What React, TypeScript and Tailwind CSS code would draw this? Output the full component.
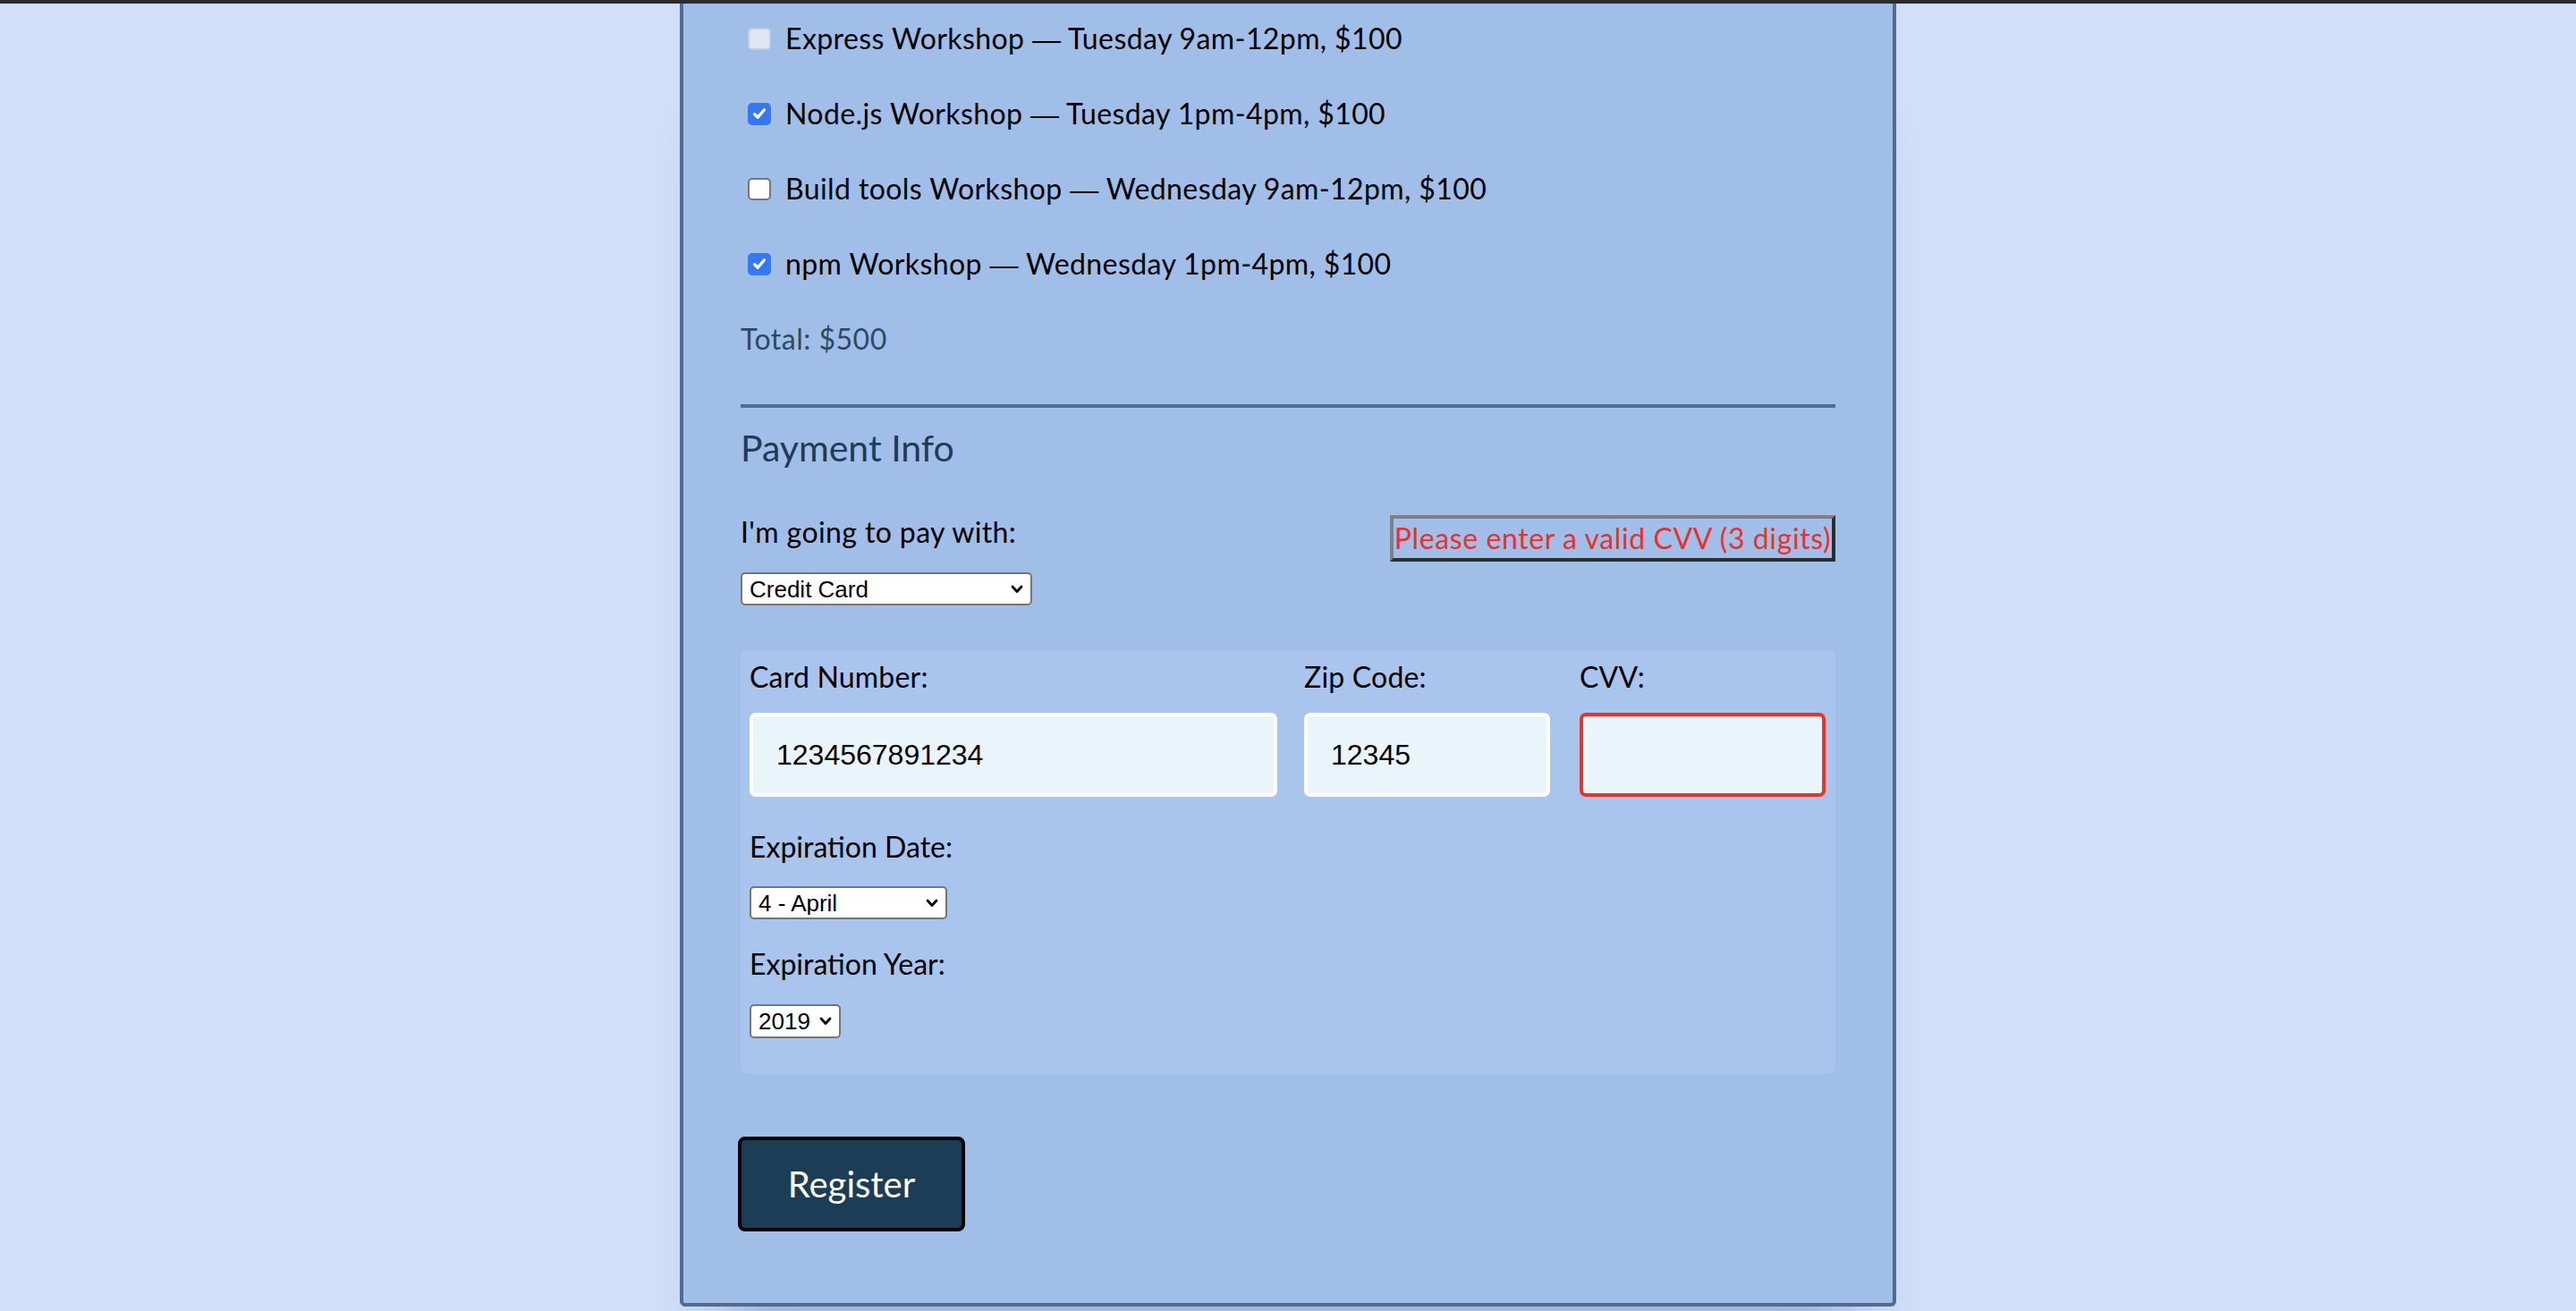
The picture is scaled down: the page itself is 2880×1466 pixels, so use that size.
import { useState } from "react";

type BoxState = "disabled" | "checked" | "empty";

const WORKSHOPS: { name: string; time: string; state: BoxState }[] = [
  { name: "Express Workshop", time: "Tuesday 9am-12pm, $100", state: "disabled" },
  { name: "Node.js Workshop", time: "Tuesday 1pm-4pm, $100", state: "checked" },
  { name: "Build tools Workshop", time: "Wednesday 9am-12pm, $100", state: "empty" },
  { name: "npm Workshop", time: "Wednesday 1pm-4pm, $100", state: "checked" },
];

function Box({ state }: { state: BoxState }) {
  if (state === "checked")
    return (
      <span className="flex h-[25px] w-[26px] shrink-0 items-center justify-center rounded-[5px] bg-[#3478f6]">
        <svg viewBox="0 0 16 16" className="size-[18px]">
          <path d="M3.2 8.6 L6.4 11.8 L12.8 4.2" fill="none" stroke="white" strokeWidth="3" strokeLinecap="round" strokeLinejoin="round" />
        </svg>
      </span>
    );
  if (state === "disabled")
    return <span className="h-[25px] w-[26px] shrink-0 rounded-[5px] border-2 border-[#c3cdda] bg-[#dfe6f1]" />;
  return <span className="h-[25px] w-[26px] shrink-0 rounded-[5px] border-2 border-[#767676] bg-white" />;
}

function Chevron() {
  return (
    <svg viewBox="0 0 14 10" className="pointer-events-none absolute right-[10px] top-1/2 h-[10px] w-[14px] -translate-y-1/2">
      <path d="M2 2 L7 7.5 L12 2" fill="none" stroke="black" strokeWidth="2.8" strokeLinecap="round" strokeLinejoin="round" />
    </svg>
  );
}

function Select({ value, options, className }: { value: string; options: string[]; className: string }) {
  const [v, setV] = useState(value);
  return (
    <div className={`relative ${className}`}>
      <select
        value={v}
        onChange={(e) => setV(e.target.value)}
        className="h-full w-full appearance-none rounded-[5px] border-2 border-[#767676] bg-white pl-[8px] font-['Liberation_Sans',Arial,sans-serif] text-[26px] leading-none text-black outline-none"
      >
        {options.map((o) => (
          <option key={o}>{o}</option>
        ))}
      </select>
      <Chevron />
    </div>
  );
}

function Field({ label, value, width, error }: { label: string; value: string; width: string; error?: boolean }) {
  return (
    <div className={width}>
      <label className="block text-[32px] leading-[40px] tracking-[0.2px] text-black">{label}</label>
      <input
        defaultValue={value}
        className={`mt-[20px] h-[94px] w-full rounded-[7px] border-[4px] bg-[#e9f5fa] pl-[26px] font-['Liberation_Sans',Arial,sans-serif] text-[32px] text-black outline-none ${
          error ? "border-[#e8352b]" : "border-white"
        }`}
      />
    </div>
  );
}

export default function App() {
  return (
    <div className="min-h-[1466px] overflow-hidden bg-[#d1dff8] font-['Lato','Noto_Sans',sans-serif]">
      <div className="h-[4px] bg-[#2c2c2c]" />
      <div className="mx-auto w-[1360px] rounded-b-[6px] border-x-4 border-b-4 border-[#4f6d91] bg-[#a1bee9] px-[64px] pb-[80px] pt-[19px] shadow-[0_90px_70px_-50px_rgba(40,70,130,0.3)]">
        <div className="flex flex-col gap-[44px]">
          {WORKSHOPS.map((w) => (
            <label key={w.name} className="ml-[8px] flex h-[40px] items-center gap-[16px] text-[32px] leading-[40px] tracking-[0.4px] text-black">
              <Box state={w.state} />
              <span>
                {w.name} <span className="font-['Liberation_Sans',sans-serif]">—</span> {w.time}
              </span>
            </label>
          ))}
          <p className="text-[32px] leading-[40px] tracking-[0.5px] text-[#2b4a66]">Total: $500</p>
        </div>

        <hr className="mt-[53px] border-0 border-t-4 border-[#4f6e93]" />

        <h2 className="mt-[20px] text-[41px] leading-[50px] text-[#1f3b57]">Payment Info</h2>

        <div className="mt-[49px] flex items-start justify-between">
          <div>
            <p className="text-[32px] leading-[40px] tracking-[0.4px] text-black">I'm going to pay with:</p>
            <Select value="Credit Card" options={["Select Payment Method", "Credit Card", "PayPal", "Bitcoin"]} className="mt-[25px] h-[37px] w-[326px]" />
          </div>
          <span className="mt-[1px] flex h-[52px] w-[498px] items-center justify-center whitespace-nowrap border-[4px] border-b-[#2d2d2d] border-l-[#808080] border-r-[#2d2d2d] border-t-[#808080] text-[32px] leading-none tracking-[0.6px] text-[#ec2f27]">
            Please enter a valid CVV (3 digits)
          </span>
        </div>

        <div className="mt-[50px] rounded-[8px] bg-[#a9c5ed] pb-[40px] pl-[10px] pt-[10px]">
          <div className="flex">
            <Field label="Card Number:" value="1234567891234" width="w-[590px]" />
            <div className="w-[30px]" />
            <Field label="Zip Code:" value="12345" width="w-[275px]" />
            <div className="w-[33px]" />
            <Field label="CVV:" value="" width="w-[275px]" error />
          </div>

          <p className="mt-[36px] text-[32px] leading-[40px] text-black">Expiration Date:</p>
          <Select
            value="4 - April"
            options={["1 - January", "2 - February", "3 - March", "4 - April", "5 - May", "6 - June", "7 - July", "8 - August", "9 - September", "10 - October", "11 - November", "12 - December"]}
            className="mt-[24px] h-[37px] w-[221px]"
          />

          <p className="mt-[30px] text-[32px] leading-[40px] text-black">Expiration Year:</p>
          <Select value="2019" options={["2019", "2020", "2021", "2022", "2023", "2024"]} className="mt-[25px] h-[38px] w-[102px]" />
        </div>

        <button className="ml-[-3px] mt-[70px] flex h-[106px] w-[254px] items-center justify-center rounded-[8px] border-4 border-black bg-[#1b3d55] text-[40px] text-white">
          Register
        </button>
      </div>
    </div>
  );
}
